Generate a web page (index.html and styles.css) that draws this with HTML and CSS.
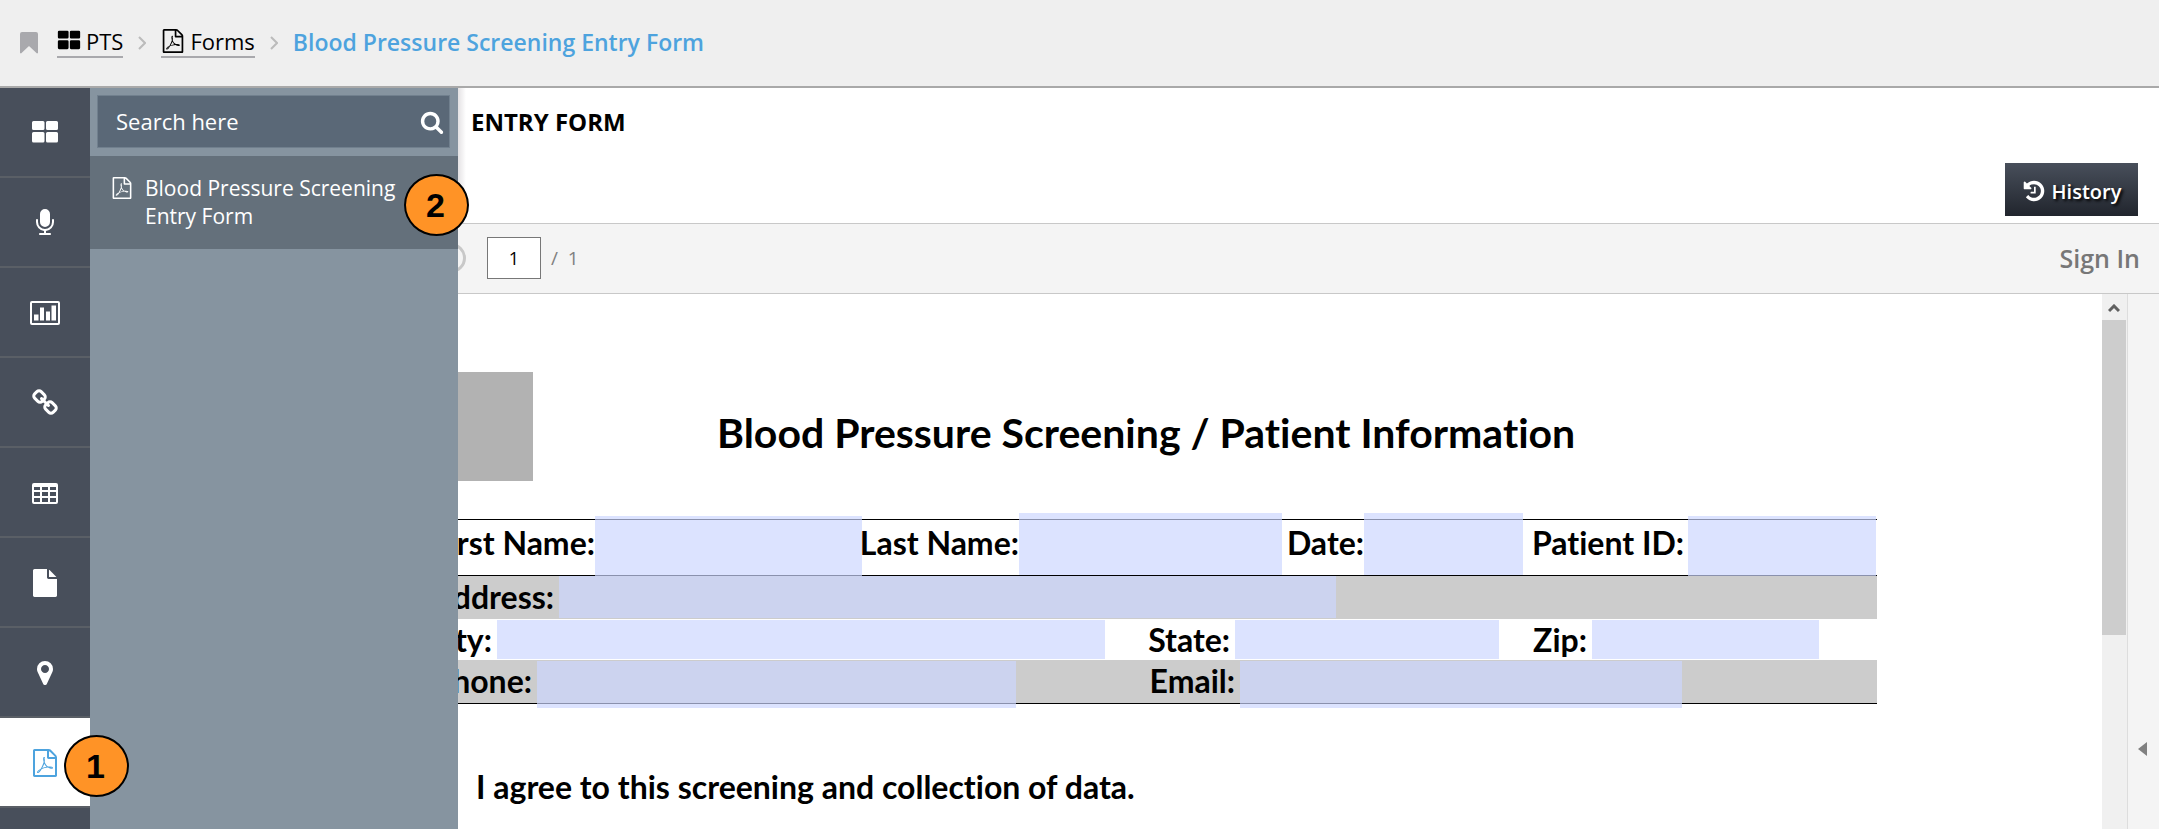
FILE: index.html
```html
<!DOCTYPE html>
<html lang="en">
<head>
<meta charset="utf-8">
<title>Blood Pressure Screening Entry Form</title>
<link rel="stylesheet" href="styles.css">
</head>
<body>
<svg class="defs" aria-hidden="true">
  <symbol id="i-grid" viewBox="0 2 28 28"><path d="M2.500 4h9.500a1.500 1.500 0 0 1 1.500 1.500v6a1.500 1.500 0 0 1-1.500 1.500h-9.500a1.500 1.500 0 0 1-1.500-1.500v-6a1.500 1.500 0 0 1 1.500-1.500zM16.500 4h9a1.500 1.500 0 0 1 1.500 1.500v6a1.500 1.500 0 0 1-1.500 1.500h-9a1.500 1.500 0 0 1-1.500-1.500v-6a1.500 1.500 0 0 1 1.500-1.500zM2.500 15h9.500a1.500 1.500 0 0 1 1.500 1.500v7.500a1.500 1.500 0 0 1-1.500 1.500h-9.500a1.500 1.500 0 0 1-1.500-1.500v-7.500a1.500 1.500 0 0 1 1.500-1.500zM16.500 15h9a1.500 1.500 0 0 1 1.500 1.500v7.500a1.500 1.500 0 0 1-1.500 1.500h-9a1.500 1.500 0 0 1-1.500-1.500v-7.500a1.500 1.500 0 0 1 1.500-1.500z"/></symbol>
  <symbol id="i-mic" viewBox="0 0 1792 1792"><path d="M1472 704v128q0 221-147.500 384.500t-364.500 187.500v132h256q26 0 45 19t19 45-19 45-45 19h-640q-26 0-45-19t-19-45 19-45 45-19h256v-132q-217-24-364.500-187.500t-147.500-384.500v-128q0-26 19-45t45-19 45 19 19 45v128q0 185 131.500 316.500t316.500 131.500 316.500-131.500 131.500-316.500v-128q0-26 19-45t45-19 45 19 19 45zm-256-384v512q0 132-94 226t-226 94-226-94-94-226v-512q0-132 94-226t226-94 226 94 94 226z"/></symbol>
  <symbol id="i-chart" viewBox="0 0 30 24"><path fill-rule="evenodd" d="M2 0h26a2 2 0 0 1 2 2v20a2 2 0 0 1-2 2h-26a2 2 0 0 1-2-2v-20a2 2 0 0 1 2-2zM2 2v20h26v-20zM4 13.500h4.500v6h-4.500zM10 6.500h4v13h-4zM16 10.500h4v9h-4zM21.500 4.500h4.500v15h-4.500z"/></symbol>
  <symbol id="i-link" viewBox="0 0 1792 1792"><path d="M1520 1216q0-40-28-68l-208-208q-28-28-68-28-42 0-72 32 3 3 19 18.500t21.500 21.500 15 19 13 25.500 3.500 27.500q0 40-28 68t-68 28q-15 0-27.500-3.500t-25.500-13-19-15-21.500-21.500-18.500-19q-33 31-33 73 0 40 28 68l206 207q27 27 68 27 40 0 68-26l147-146q28-28 28-67zm-703-705q0-40-28-68l-206-207q-28-28-68-28-39 0-68 27l-147 146q-28 28-28 67 0 40 28 68l208 208q27 27 68 27 42 0 72-31-3-3-19-18.500t-21.500-21.500-15-19-13-25.500-3.500-27.500q0-40 28-68t68-28q15 0 27.500 3.500t25.500 13 19 15 21.500 21.500 18.500 19q33-31 33-73zm895 705q0 120-85 203l-147 146q-83 83-203 83-121 0-204-85l-206-207q-83-83-83-203 0-123 88-209l-88-88q-86 88-208 88-120 0-204-84l-208-208q-84-84-84-204t85-203l147-146q83-83 203-83 121 0 204 85l206 207q83 83 83 203 0 123-88 209l88 88q86-88 208-88 120 0 204 84l208 208q84 84 84 204z"/></symbol>
  <symbol id="i-table" viewBox="0 0 28 28"><path fill-rule="evenodd" d="M3 4h22a2 2 0 0 1 2 2v17a2 2 0 0 1-2 2h-22a2 2 0 0 1-2-2v-17a2 2 0 0 1 2-2zM3 8v3h6v-3zM11 8v3h6v-3zM19 8v3h6v-3zM3 13v4h6v-4zM11 13v4h6v-4zM19 13v4h6v-4zM3 19v4h6v-4zM11 19v4h6v-4zM19 19v4h6v-4z"/></symbol>
  <symbol id="i-file" viewBox="0 0 1792 1792"><path d="M1152 512v-472q22 14 36 28l408 408q14 14 28 36h-472zm-128 32q0 40 28 68t68 28h544v1056q0 40-28 68t-68 28h-1344q-40 0-68-28t-28-68v-1600q0-40 28-68t68-28h800v544z"/></symbol>
  <symbol id="i-pin" viewBox="0 0 1792 1792"><path d="M1152 640q0-106-75-181t-181-75-181 75-75 181 75 181 181 75 181-75 75-181zm256 0q0 109-33 179l-364 774q-16 33-47.500 52t-67.500 19-67.500-19-46.500-52l-365-774q-33-70-33-179 0-212 150-362t362-150 362 150 150 362z"/></symbol>
  <symbol id="i-pdf" viewBox="0 0 1792 1792"><path d="M1596 380q28 28 48 76t20 88v1152q0 40-28 68t-68 28h-1344q-40 0-68-28t-28-68v-1600q0-40 28-68t68-28h896q40 0 88 20t76 48zm-444-244v376h376q-10-29-22-41l-313-313q-12-12-41-22zm384 1528v-1024h-416q-40 0-68-28t-28-68v-416h-768v1536h1280zm-514-593q33 26 84 56 59-7 117-7 147 0 177 49 16 22 2 52 0 1-1 2l-2 2v1q-6 38-71 38-48 0-115-20t-130-53q-221 24-392 83-153 262-242 262-15 0-28-7l-24-12q-1-1-6-5-10-10-6-36 9-40 56-91.500t132-96.500q14-9 23 6 2 2 2 4 52-85 107-197 68-136 104-262-24-82-30.500-159.500t6.500-127.500q11-40 42-40h22q23 0 35 15 18 21 9 68-2 6-4 8 1 3 1 8v30q-2 123-14 192 55 164 146 238zm-576 411q52-24 137-158-51 40-87.500 84t-49.500 74zm398-920q-15 42-2 132 1-7 7-44 0-3 7-43 1-4 4-8-1-1-1-2t-1-2q-1-22-13-36 0 1-1 2v2zm-124 661q135-54 284-81-2-1-13-9.500t-16-13.500q-76-67-127-176-27 86-83 197-30 56-45 83zm646-16q-24-24-140-24 76 28 124 28 14 0 18-1 0-1-2-3z"/></symbol>
  <symbol id="i-search" viewBox="0 0 1792 1792"><path d="M1216 832q0-185-131.500-316.500t-316.500-131.500-316.500 131.500-131.500 316.500 131.500 316.500 316.500 131.500 316.500-131.500 131.500-316.500zm512 832q0 52-38 90t-90 38q-54 0-90-38l-343-342q-179 124-399 124-143 0-273.500-55.500t-225-150-150-225-55.500-273.500 55.500-273.500 150-225 225-150 273.500-55.500 273.500 55.500 225 150 150 225 55.500 273.500q0 220-124 399l343 343q37 37 37 90z"/></symbol>
  <symbol id="i-history" viewBox="0 0 1792 1792"><path d="M1664 896q0 156-61 298t-164 245-245 164-298 61q-172 0-327-72.500t-264-204.500q-7-10-6.500-22.500t8.500-20.500l137-138q10-9 25-9 16 2 23 12 73 95 179 147t225 52q104 0 198.500-40.500t163.500-109.500 109.500-163.500 40.500-198.500-40.500-198.500-109.500-163.500-163.500-109.500-198.500-40.500q-98 0-188 35.500t-160 101.500l137 138q31 30 14 69-17 40-59 40h-448q-26 0-45-19t-19-45v-448q0-42 40-59 39-17 69 14l130 129q107-101 244.500-156.500t284.500-55.500q156 0 298 61t245 164 164 245 61 298zm-640-288v448q0 14-9 23t-23 9h-320q-14 0-23-9t-9-23v-64q0-14 9-23t23-9h224v-352q0-14 9-23t23-9h64q14 0 23 9t9 23z"/></symbol>
</svg>

<header class="topbar">
  <svg class="bookmark" viewBox="0 0 18 22" aria-hidden="true"><path d="M2 0h14a2 2 0 0 1 2 2v19l-1 .5-8-7.500-8 7.500-1-.5v-19a2 2 0 0 1 2-2z"/></svg>
  <nav class="crumbs" aria-label="Breadcrumb">
    <a class="crumb" href="#"><svg class="icon-md"><use href="#i-grid"/></svg>PTS</a>
    <svg class="chevron" viewBox="0 0 8 14" aria-hidden="true"><path d="M1 1l6 6-6 6"/></svg>
    <a class="crumb" href="#"><svg class="icon-md"><use href="#i-pdf"/></svg>Forms</a>
    <svg class="chevron" viewBox="0 0 8 14" aria-hidden="true"><path d="M1 1l6 6-6 6"/></svg>
    <span class="crumb-current">Blood Pressure Screening Entry Form</span>
  </nav>
</header>

<div class="workspace">
  <nav class="rail" aria-label="Modules">
    <a class="rail-item" href="#" aria-label="Dashboard"><svg class="icon-lg"><use href="#i-grid"/></svg></a>
    <a class="rail-item" href="#" aria-label="Audio"><svg class="icon-lg"><use href="#i-mic"/></svg></a>
    <a class="rail-item" href="#" aria-label="Charts"><svg class="icon-chart"><use href="#i-chart"/></svg></a>
    <a class="rail-item" href="#" aria-label="Links"><svg class="icon-lg"><use href="#i-link"/></svg></a>
    <a class="rail-item" href="#" aria-label="Tables"><svg class="icon-lg"><use href="#i-table"/></svg></a>
    <a class="rail-item" href="#" aria-label="Files"><svg class="icon-lg"><use href="#i-file"/></svg></a>
    <a class="rail-item" href="#" aria-label="Locations"><svg class="icon-lg"><use href="#i-pin"/></svg></a>
    <a class="rail-item active" href="#" aria-label="Forms"><svg class="icon-lg"><use href="#i-pdf"/></svg><span class="callout">1</span></a>
  </nav>

  <aside class="drawer">
    <form class="search">
      <input class="search-input" type="text" placeholder="Search here" aria-label="Search here">
      <button class="search-button" type="button" aria-label="Search"><svg class="icon-md"><use href="#i-search"/></svg></button>
    </form>
    <a class="drawer-item" href="#"><svg class="icon-sm"><use href="#i-pdf"/></svg><span>Blood Pressure Screening Entry Form</span><span class="callout">2</span></a>
  </aside>

  <main class="content">
    <div class="content-head">
      <h1 class="content-title">ENTRY FORM</h1>
      <button class="history" type="button"><svg class="icon-md"><use href="#i-history"/></svg>History</button>
    </div>

    <div class="toolbar">
      <span class="knob"></span>
      <input class="page-input" type="text" value="1" aria-label="Page">
      <span class="page-total">/&nbsp; 1</span>
      <button class="sign-in" type="button">Sign In</button>
    </div>

    <div class="viewer">
      <div class="document">
        <div class="doc-head">
          <div class="logo"></div>
          <h2 class="doc-title">Blood Pressure Screening / Patient Information</h2>
        </div>
        <form class="fields">
          <div class="row row-name">
            <label for="first">First Name:</label><input id="first" type="text">
            <label for="last">Last Name:</label><input id="last" class="tall" type="text">
            <label for="date">Date:</label><input id="date" class="tall" type="text">
            <label for="pid">Patient ID:</label><input id="pid" type="text">
          </div>
          <div class="row row-address shaded">
            <label for="address">Address:</label><input id="address" type="text">
          </div>
          <div class="row row-city">
            <label for="city">City:</label><input id="city" type="text">
            <label for="state">State:</label><input id="state" type="text">
            <label for="zip">Zip:</label><input id="zip" type="text">
          </div>
          <div class="row row-phone shaded">
            <label for="phone">Phone:</label><input id="phone" type="text">
            <label for="email">Email:</label><input id="email" type="text">
          </div>
        </form>
        <p class="consent">I agree to this screening and collection of data.</p>
      </div>
      <div class="scrollbar">
        <svg class="scroll-up" viewBox="0 0 12 9" aria-hidden="true"><path d="M1 7l5-5 5 5"/></svg>
        <div class="thumb"></div>
      </div>
      <div class="side-strip"><svg class="expand" viewBox="0 0 10 14" aria-hidden="true"><path d="M0 7l9-7v14z"/></svg></div>
    </div>
  </main>
</div>
</body>
</html>
```

FILE: styles.css
```css
* { box-sizing: border-box; }

body {
  margin: 0;
  height: 100vh;
  display: flex;
  flex-direction: column;
  overflow: hidden;
  background: #fff;
  color: #000;
  font-family: "Open Sans", "Noto Sans", sans-serif;
  font-size: 22px;
}

a { color: inherit; text-decoration: none; }
button, input { font: inherit; color: inherit; border: 0; padding: 0; margin: 0; }
svg { fill: currentColor; flex: none; }

.defs { position: absolute; width: 0; height: 0; }
.icon-sm { width: 22px; height: 22px; }
.icon-md { width: 24px; height: 24px; }
.icon-lg { width: 28px; height: 28px; }
.icon-chart { width: 30px; height: 24px; }

/* Top bar */
.topbar {
  flex: none;
  height: 88px;
  padding: 0 20px;
  display: flex;
  align-items: center;
  gap: 19px;
  background: #efefef;
  border-bottom: 2px solid #a9a9a9;
}
.bookmark { width: 18px; height: 22px; color: #a9a9ad; }
.crumbs { display: flex; align-items: center; gap: 15px; font-size: 22px; }
.crumb {
  display: flex;
  align-items: center;
  gap: 5px;
  height: 30px;
  padding-bottom: 2px;
  line-height: 26px;
  border-bottom: 2px solid #a9a9ad;
}
.crumb-current { color: #4da3de; font-size: 23px; font-weight: 600; line-height: 28px; padding-bottom: 2px; }
.chevron { width: 8px; height: 14px; fill: none; stroke: #bbb; stroke-width: 2; }

/* Left rail */
.workspace { position: relative; flex: 1; min-height: 0; display: flex; }
.rail { flex: none; width: 90px; background: #484f5b; position: relative; z-index: 3; }
.rail-item {
  position: relative;
  height: 90px;
  padding-top: 2px;
  display: flex;
  align-items: center;
  justify-content: center;
  color: #fff;
  border-bottom: 2px solid #5a5f66;
}
.rail-item.active { background: #fff; color: #4da3de; }

.callout {
  position: absolute;
  right: -39px;
  top: 17px;
  width: 65px;
  height: 62px;
  padding-right: 2px;
  display: flex;
  align-items: center;
  justify-content: center;
  border: 2px solid #000;
  border-radius: 50%;
  background: #ff9326;
  color: #000;
  font: 700 34px "Liberation Sans", sans-serif;
}

/* Drawer over the content */
.drawer {
  position: absolute;
  z-index: 2;
  left: 90px;
  top: 0;
  bottom: 0;
  width: 368px;
  background: #8694a0;
}
.search {
  margin: 7px 8px 8px 7px;
  height: 53px;
  display: flex;
  align-items: center;
  background: #5a6877;
  border: 1px solid #71808e;
  color: #fff;
  font-size: 22px;
}
.search-input { flex: 1; min-width: 0; height: 100%; padding: 0 18px 2px; background: none; outline: 0; }
.search-input::placeholder { color: #fff; opacity: 1; }
.search-button { display: flex; margin-right: 5px; background: none; }
.drawer-item {
  position: relative;
  display: flex;
  gap: 12px;
  padding: 18px 50px 19px 21px;
  background: #64707b;
  color: #fff;
  font-size: 21px;
  line-height: 28px;
}
.drawer-item .icon-sm { margin-top: 3px; }
.drawer-item .callout { right: -11px; top: 18px; }

/* Content */
.content { flex: 1; min-width: 0; display: flex; flex-direction: column; }
.content-head {
  flex: none;
  height: 135px;
  padding: 18px 21px 7px 381px;
  display: flex;
  justify-content: space-between;
  background: linear-gradient(90deg, #fff 368px, #e4e2e4 368px, #fff 376px);
}
.content-title { margin: 0; font-size: 24px; line-height: 32px; font-weight: 700; }
.history {
  align-self: flex-end;
  width: 133px;
  height: 53px;
  padding-top: 3px;
  display: flex;
  align-items: center;
  justify-content: center;
  gap: 6px;
  background: linear-gradient(#484f5b, #21252d);
  color: #fff;
  font-size: 20px;
  font-weight: 600;
  text-shadow: 2px 2px 3px #000;
}
.toolbar {
  flex: none;
  height: 71px;
  padding: 0 19px 2px 346px;
  display: flex;
  align-items: center;
  background: #f4f4f4;
  border-top: 1px solid #c8c8c8;
  border-bottom: 1px solid #c8c8c8;
}
.knob { width: 30px; height: 30px; border: 3px solid #c8c8c8; border-radius: 50%; }
.page-input {
  width: 54px;
  height: 42px;
  margin: 0 10px 0 21px;
  border: 1px solid #777;
  background: #fff;
  text-align: center;
  font-size: 18px;
}
.page-total { color: #808080; font-size: 19px; }
.sign-in { margin-left: auto; background: none; color: #777; font-size: 25px; font-weight: 600; }

/* Document viewer */
.viewer { flex: 1; min-height: 0; display: flex; }
.document {
  flex: 1;
  min-width: 0;
  overflow: hidden;
  padding: 78px 225px 0 335px;
  font-family: Lato, sans-serif;
  font-weight: 700;
  font-size: 32px;
  font-variant-ligatures: none;
}
.doc-head { display: flex; gap: 184px; }
.logo { flex: none; width: 108px; height: 109px; background: #b2b2b2; }
.doc-title { margin: 38px 0 0; font-size: 41px; line-height: 46px; white-space: nowrap; }
.fields { margin-top: 38px; border-top: 1px solid #000; border-bottom: 1px solid #000; }
.row { display: grid; height: 43px; white-space: nowrap; }
.row label { display: flex; justify-content: flex-end; min-width: 0; line-height: 42px; padding-right: 5px; }
.row input { min-width: 0; width: 100%; height: 42px; background: rgba(203, 214, 255, .68); }
.row-name {
  height: 56px;
  border-bottom: 1px solid #000;
  grid-template-columns: 170fr 267fr 157fr 263fr 82fr 159fr 165fr 188fr 1fr;
}
.row-name label { line-height: 46px; padding-right: 0; }
.row-name label:last-of-type { padding-right: 4px; }
.row-name input { height: 60px; margin-top: -4px; }
.row-name .tall { height: 62px; margin-top: -7px; }
.row-address { grid-template-columns: 134fr 777fr 541fr; }
.row-city { height: 41px; grid-template-columns: 72fr 608fr 130fr 264fr 93fr 227fr 58fr; }
.row-city input { height: 39px; margin-top: 1px; }
.row-phone { grid-template-columns: 112fr 479fr 224fr 442fr 195fr; }
.row-phone input { height: 47px; margin-top: 1px; }
.shaded { background: #ccc; }
.consent { margin: 64px 0 0 51px; line-height: 38px; white-space: nowrap; }

.scrollbar {
  flex: none;
  width: 26px;
  border-right: 1px solid #ddd;
  background: #f0f0f0;
}
.scroll-up { display: block; width: 12px; height: 9px; margin: 10px 6px 7px; fill: none; stroke: #606060; stroke-width: 3; }
.thumb { width: 24px; height: 315px; background: #cdcdcd; }
.side-strip { flex: none; width: 31px; padding: 447px 0 0 10px; background: #f4f4f4; }
.expand { display: block; width: 10px; height: 16px; color: #808080; }
```
